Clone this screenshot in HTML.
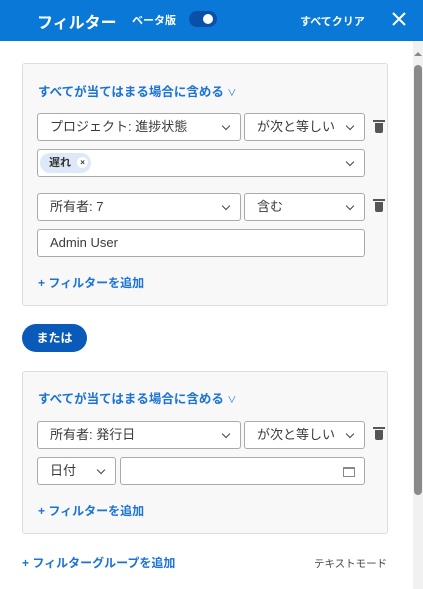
<!DOCTYPE html>
<html><head><meta charset="utf-8"><style>
*{box-sizing:border-box;margin:0;padding:0}
body{width:423px;height:589px;overflow:hidden;background:#fff;font-family:"Liberation Sans","Noto Sans CJK JP",sans-serif;position:relative;color:#333}
.hdr{position:absolute;left:0;top:0;width:423px;height:41px;background:#0a78d6;color:#fff}
.a{position:absolute}
.grp{position:absolute;left:22px;width:366px;background:#f8f8f8;border:1px solid #ddd;border-radius:3px}
.box{position:absolute;background:#fff;border:1px solid #aaa;border-radius:3px;height:28px;font-size:13px;line-height:26px;padding-left:12px;color:#3a3a3a}
.chev{position:absolute;right:11px;top:9px;width:6px;height:6px;border-right:1.2px solid #444;border-bottom:1.2px solid #444;transform:rotate(45deg)}
.blue{color:#1a73d6;font-weight:bold;font-size:12.5px}
.trash{position:absolute;width:8px;height:10px;background:#555;border-radius:0 0 2px 2px}
.trash:before{content:"";position:absolute;left:-2px;top:-3px;width:12px;height:2px;background:#555}
</style></head><body>
<div class="hdr">
 <div class="a" style="left:37px;top:9px;font-size:16px;font-weight:bold">フィルター</div>
 <div class="a" style="left:132px;top:12px;font-size:11px;font-weight:bold">ベータ版</div>
 <div class="a" style="left:189px;top:11px;width:28px;height:16px;border-radius:8px;background:#0a4fa8"><div class="a" style="left:14px;top:3px;width:10px;height:10px;border-radius:5px;background:#fff"></div></div>
 <div class="a" style="left:300px;top:13px;font-size:11px;font-weight:bold">すべてクリア</div>
 <svg class="a" style="left:392px;top:12px" width="14" height="14"><path d="M1 1L13 13M13 1L1 13" stroke="#fff" stroke-width="2"/></svg>
</div>
<div class="a" style="left:413px;top:41px;width:10px;height:548px;background:#f1f1f1"></div>
<div class="a" style="left:414px;top:65px;width:8px;height:430px;background:#8a8a8a;border-radius:4px"></div>
<div class="a" style="left:414px;top:52px;width:0;height:0;border-left:4px solid transparent;border-right:4px solid transparent;border-bottom:4px solid #888"></div>

<div class="grp" style="top:63px;height:243px"></div>
<div class="a blue" style="left:38px;top:81px">すべてが当てはまる場合に含める <span style="font-weight:normal;font-size:9px">∨</span></div>
<div class="box" style="left:37px;top:113px;width:204px">プロジェクト: 進捗状態<i class="chev"></i></div>
<div class="box" style="left:244px;top:113px;width:121px">が次と等しい<i class="chev"></i></div>
<div class="trash" style="left:375px;top:123px"></div>
<div class="box" style="left:37px;top:149px;width:328px"><i class="chev"></i></div>
<div class="a" style="left:40px;top:153px;width:51px;height:20px;border-radius:10px;background:#dde9f8;font-size:11px;font-weight:bold;line-height:20px;padding-left:9px">遅れ <span style="display:inline-block;width:11px;height:11px;border-radius:6px;background:#fff;font-size:8px;line-height:11px;text-align:center;margin-left:3px;vertical-align:1px">×</span></div>
<div class="box" style="left:37px;top:193px;width:204px">所有者: 7<i class="chev"></i></div>
<div class="box" style="left:244px;top:193px;width:121px">含む<i class="chev"></i></div>
<div class="trash" style="left:375px;top:202px"></div>
<div class="box" style="left:37px;top:229px;width:328px">Admin User</div>
<div class="a blue" style="left:38px;top:274px;font-size:12px">+ フィルターを追加</div>

<div class="a" style="left:22px;top:324px;width:65px;height:28px;border-radius:14px;background:#0a5bb9;color:#fff;font-size:12px;font-weight:bold;line-height:28px;text-align:center">または</div>

<div class="grp" style="top:371px;height:163px"></div>
<div class="a blue" style="left:38px;top:388px">すべてが当てはまる場合に含める <span style="font-weight:normal;font-size:9px">∨</span></div>
<div class="box" style="left:37px;top:421px;width:204px">所有者: 発行日<i class="chev"></i></div>
<div class="box" style="left:244px;top:421px;width:121px">が次と等しい<i class="chev"></i></div>
<div class="trash" style="left:375px;top:430px"></div>
<div class="box" style="left:37px;top:457px;width:79px">日付<i class="chev"></i></div>
<div class="box" style="left:120px;top:457px;width:245px"><div class="a" style="right:9px;top:9px;width:12px;height:10px;border:1px solid #888;border-top-width:2px"></div></div>
<div class="a blue" style="left:38px;top:502px;font-size:12px">+ フィルターを追加</div>

<div class="a blue" style="left:22px;top:554px;font-size:12px">+ フィルターグループを追加</div>
<div class="a" style="left:314px;top:556px;font-size:10.5px;color:#444">テキストモード</div>
</body></html>
